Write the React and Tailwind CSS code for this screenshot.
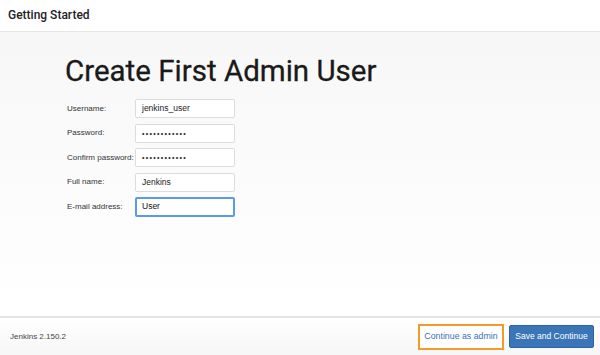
export default function App() {
  const rows = [
    { label: "Username:", value: "jenkins_user", type: "text" },
    { label: "Password:", value: "••••••••••••", type: "pw" },
    { label: "Confirm password:", value: "••••••••••••", type: "pw" },
    { label: "Full name:", value: "Jenkins", type: "text" },
    { label: "E-mail address:", value: "User", type: "focus" },
  ];
  const helv = { fontFamily: "'Liberation Sans', Arial, sans-serif" };
  return (
    <div className="w-[600px] h-[355px] flex flex-col bg-white overflow-hidden" style={{ fontFamily: "Roboto, 'Liberation Sans', sans-serif" }}>
      <div className="h-[32px] shrink-0 flex items-center px-[8px] border-b border-[#e6e6e6] bg-white">
        <span className="text-[12px] font-medium text-[#222] mt-[-1px]">Getting Started</span>
      </div>
      <div className="flex-1 bg-gradient-to-b from-[#f7f7f7] to-white pl-[65px] pt-[19px]">
        <h1 className="text-[29.5px] leading-[40px] text-[#1a1a1a] font-normal [-webkit-text-stroke:0.3px_#1a1a1a]">Create First Admin User</h1>
        <div className="mt-[8px] flex flex-col gap-[5.5px]" style={helv}>
          {rows.map((r) => (
            <div key={r.label} className="flex items-center h-[19px]">
              <div className="w-[70px] pl-[2px] text-[8px] text-[#333] whitespace-nowrap">{r.label}</div>
              <div
                className={
                  r.type === "focus"
                    ? "w-[100px] h-[20px] bg-white border-2 border-[#5a9ae6] rounded-[2px] flex items-center px-[5px] text-[8.5px] text-[#111]"
                    : "w-[100px] h-[19px] bg-white border border-[#dcdcdc] rounded-[2px] flex items-center px-[6px] text-[8.5px] text-[#222]"
                }
              >
                {r.type === "pw" ? <span className="text-[7px] tracking-[1.3px] leading-none">{r.value}</span> : r.value}
              </div>
            </div>
          ))}
        </div>
      </div>
      <div className="h-[39px] shrink-0 border-t-2 border-[#e4e4e4] bg-gradient-to-b from-white to-[#f6f6f6] flex items-center justify-between pl-[10px] pr-[6px]" style={helv}>
        <span className="text-[8px] text-[#444]">Jenkins 2.150.2</span>
        <div className="flex items-center gap-[5px]">
          <div className="w-[86px] h-[26px] border-2 border-[#f39a2b] bg-white flex items-center justify-center text-[8.8px] text-[#3871b4] whitespace-nowrap">Continue as admin</div>
          <div className="w-[85px] h-[23px] rounded-[2px] bg-[#3a75b8] border border-[#2e63a1] flex items-center justify-center text-[8.5px] text-white whitespace-nowrap">Save and Continue</div>
        </div>
      </div>
    </div>
  );
}
